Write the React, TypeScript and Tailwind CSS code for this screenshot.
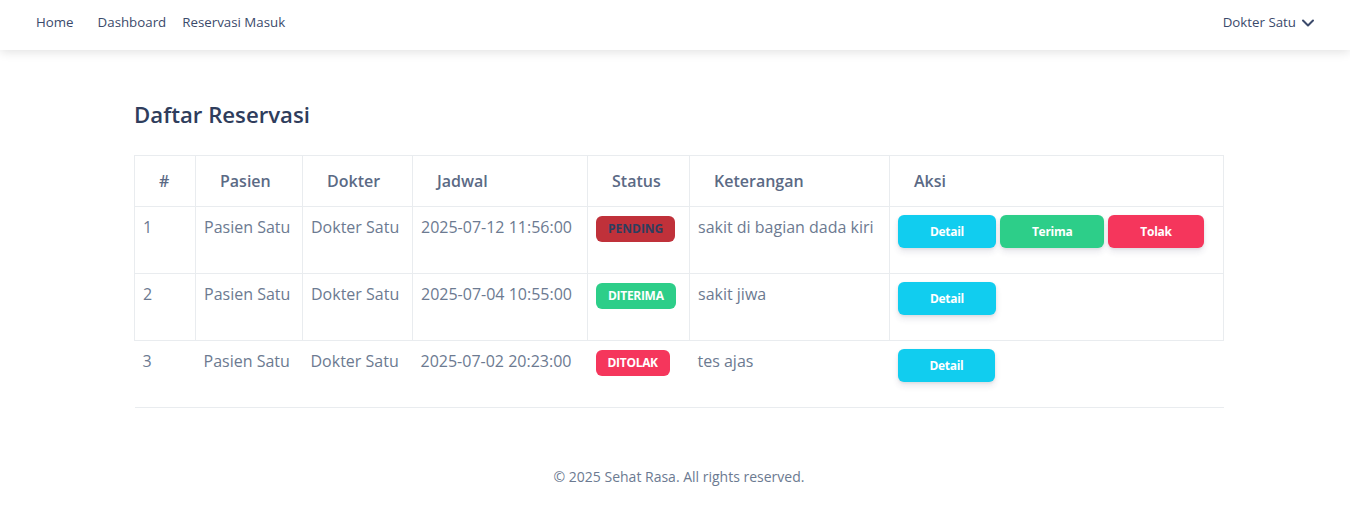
import { ChevronDown } from "lucide-react";

interface IReservasi {
  pasien: string;
  dokter: string;
  jadwal: string;
  status: "pending" | "diterima" | "ditolak";
  keterangan: string;
}

const reservasi: IReservasi[] = [
  {
    pasien: "Pasien Satu",
    dokter: "Dokter Satu",
    jadwal: "2025-07-12 11:56:00",
    status: "pending",
    keterangan: "sakit di bagian dada kiri",
  },
  {
    pasien: "Pasien Satu",
    dokter: "Dokter Satu",
    jadwal: "2025-07-04 10:55:00",
    status: "diterima",
    keterangan: "sakit jiwa",
  },
  {
    pasien: "Pasien Satu",
    dokter: "Dokter Satu",
    jadwal: "2025-07-02 20:23:00",
    status: "ditolak",
    keterangan: "tes ajas",
  },
];

const badgeClass = {
  pending: "bg-[#c0313a] text-[#2d3e5f] tracking-normal",
  diterima: "bg-[#2dce89] text-white tracking-tight",
  ditolak: "bg-[#f5365c] text-white tracking-tight",
};

const btn =
  "h-[33px] px-8 rounded-md text-xs font-bold text-white tracking-tight shadow-[0_4px_6px_rgba(50,50,93,0.11),0_1px_3px_rgba(0,0,0,0.08)]";

const App = () => {
  return (
    <div className="min-h-screen bg-white font-['Open_Sans',sans-serif] text-[#525f7f]">
      <nav className="h-[50px] flex items-center justify-between pl-9 pr-[32px] pb-1 bg-white shadow-[0_2px_10px_rgba(0,0,0,0.12)]">
        <div className="flex items-center text-[13.3px] text-[#3b4a6b]">
          <a className="mr-[24px]">Home</a>
          <a className="mr-4">Dashboard</a>
          <a>Reservasi Masuk</a>
        </div>
        <div className="flex items-center gap-0.5 text-[13.3px] text-[#3b4a6b]">
          <span>Dokter Satu</span>
          <ChevronDown size={20} strokeWidth={2.4} />
        </div>
      </nav>

      <main className="ml-[134px] w-[1090px] pt-[47px]">
        <h2 className="text-[22.2px] font-semibold text-[#2f3d5c] leading-9">
          Daftar Reservasi
        </h2>
        <table className="mt-[22px] w-full border-collapse">
          <thead>
            <tr className="h-[51px] text-left text-base font-semibold text-[#5b6a85]">
              <th className="w-[61px] border border-[#e9ecef] px-6 font-semibold">#</th>
              <th className="w-[107px] border border-[#e9ecef] px-6 font-semibold">Pasien</th>
              <th className="w-[110px] border border-[#e9ecef] px-6 font-semibold">Dokter</th>
              <th className="w-[175px] border border-[#e9ecef] px-6 font-semibold">Jadwal</th>
              <th className="w-[102px] border border-[#e9ecef] px-6 font-semibold">Status</th>
              <th className="w-[200px] border border-[#e9ecef] px-6 font-semibold">Keterangan</th>
              <th className="border border-[#e9ecef] px-6 font-semibold">Aksi</th>
            </tr>
          </thead>
          <tbody>
            {reservasi.map((r, index) => {
              const last = index === reservasi.length - 1;
              const cell = last
                ? "border-b border-[#e9ecef] p-2 align-top"
                : "border border-[#e9ecef] p-2 align-top";
              return (
                <tr key={index} className="h-[67px] text-base text-[#6c7a91]">
                  <td className={cell}>{index + 1}</td>
                  <td className={cell}>{r.pasien}</td>
                  <td className={cell}>{r.dokter}</td>
                  <td className={cell}>{r.jadwal}</td>
                  <td className={cell}>
                    <span
                      className={
                        "inline-block px-3 py-[5px] rounded-md text-xs font-bold uppercase " +
                        badgeClass[r.status]
                      }
                    >
                      {r.status}
                    </span>
                  </td>
                  <td className={cell}>{r.keterangan}</td>
                  <td className={cell}>
                    <div className="flex gap-1">
                      <button className={btn + " bg-[#11cdef]"}>Detail</button>
                      {r.status === "pending" && (
                        <>
                          <button className={btn + " bg-[#2dce89]"}>Terima</button>
                          <button className={btn + " bg-[#f5365c]"}>Tolak</button>
                        </>
                      )}
                    </div>
                  </td>
                </tr>
              );
            })}
          </tbody>
        </table>
      </main>

      <footer className="pt-[59px] pl-2 text-center text-sm text-[#6c7a91]">
        © 2025 Sehat Rasa. All rights reserved.
      </footer>
    </div>
  );
};

export default App;
